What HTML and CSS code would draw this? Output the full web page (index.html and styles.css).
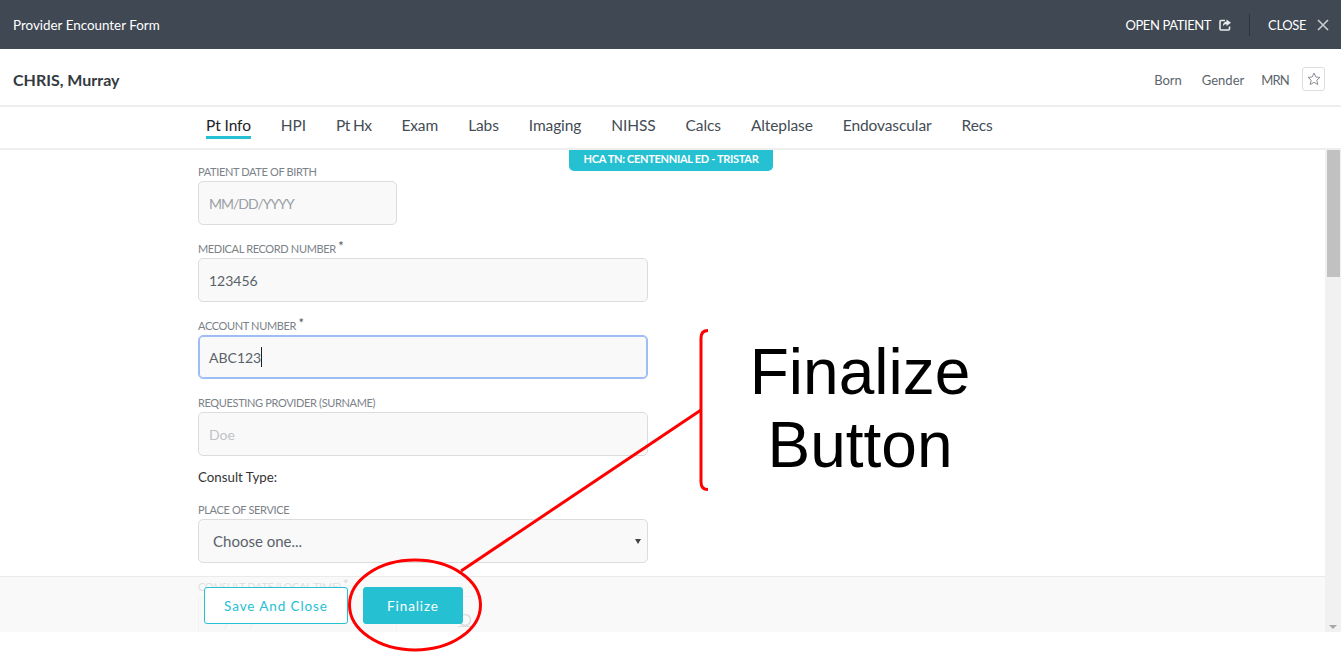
FILE: index.html
```html
<!DOCTYPE html>
<html lang="en">
<head>
    <meta charset="UTF-8">
    <title>Provider Encounter Form</title>
    <link rel="stylesheet" href="styles.css">
</head>
<body>
    <div class="app">
        <header class="topbar">
            <span class="topbar-title">Provider Encounter Form</span>
            <div class="topbar-actions">
                <a class="topbar-link">OPEN PATIENT
                    <svg class="icon-open" viewBox="0 0 12 12" width="12" height="12"><path d="M6 1.500H2a1 1 0 0 0-1 1V10a1 1 0 0 0 1 1h7.500a1 1 0 0 0 1-1V7.500" fill="none" stroke="#e8eaec" stroke-width="1.6"/><path d="M7.500 0.500 12 3.800 7.500 7V5.200C5.800 5.200 4.600 5.800 3.800 7.600 3.800 4.800 5.200 2.800 7.500 2.600Z" fill="#e8eaec"/></svg>
                </a>
                <span class="topbar-sep"></span>
                <a class="topbar-link link-close">CLOSE
                    <svg class="icon-close" viewBox="0 0 12 12" width="12" height="12"><path d="M1 1 11 11M11 1 1 11" stroke="#c9cdd1" stroke-width="1.600" fill="none"/></svg>
                </a>
            </div>
        </header>

        <div class="patient-bar">
            <span class="patient-name">CHRIS, Murray</span>
            <div class="patient-meta">
                <span class="meta-item meta-born">Born</span>
                <span class="meta-item meta-gender">Gender</span>
                <span class="meta-item meta-mrn">MRN</span>
                <span class="star-btn">
                    <svg viewBox="0 0 14 14" width="14" height="14"><path d="M7 1 8.800 5 13 5.400 9.800 8.200 10.800 12.600 7 10.300 3.200 12.600 4.200 8.200 1 5.400 5.200 5Z" fill="none" stroke="#8a8f96" stroke-width="1"/></svg>
                </span>
            </div>
        </div>

        <nav class="tabs">
            <a class="tab active">Pt Info</a>
            <a class="tab">HPI</a>
            <a class="tab tab-narrow">Pt Hx</a>
            <a class="tab">Exam</a>
            <a class="tab">Labs</a>
            <a class="tab">Imaging</a>
            <a class="tab">NIHSS</a>
            <a class="tab">Calcs</a>
            <a class="tab">Alteplase</a>
            <a class="tab">Endovascular</a>
            <a class="tab">Recs</a>
        </nav>

        <div class="body-row">
            <main class="content">
                <div class="facility">HCA TN: CENTENNIAL ED - TRISTAR</div>
                <form class="form">
                    <div class="field">
                        <label>PATIENT DATE OF BIRTH</label>
                        <div class="input short placeholder">MM/DD/YYYY</div>
                    </div>
                    <div class="field">
                        <label>MEDICAL RECORD NUMBER <sup>*</sup></label>
                        <div class="input">123456</div>
                    </div>
                    <div class="field">
                        <label>ACCOUNT NUMBER <sup>*</sup></label>
                        <div class="input focused">ABC123<span class="caret"></span></div>
                    </div>
                    <div class="field">
                        <label>REQUESTING PROVIDER (SURNAME)</label>
                        <div class="input placeholder light">Doe</div>
                    </div>
                    <p class="consult-type">Consult Type:</p>
                    <div class="field">
                        <label>PLACE OF SERVICE</label>
                        <div class="input select">Choose one...<span class="select-arrow"></span></div>
                    </div>
                    <div class="field">
                        <label>CONSULT DATE (LOCAL TIME) <sup>*</sup></label>
                        <div class="date-row">
                            <div class="input short date-tail">/ /</div>
                            <div class="input time">
                                <svg class="icon-clock" viewBox="0 0 16 18" width="16" height="18"><circle cx="8" cy="11" r="5.500" fill="none" stroke="#6a7075" stroke-width="1.500"/><path d="M1 17.500H15" fill="none" stroke="#6a7075" stroke-width="1"/></svg>
                            </div>
                        </div>
                    </div>
                </form>
                <footer class="actions">
                    <button type="button" class="btn btn-outline">Save And Close</button>
                    <button type="button" class="btn btn-fill">Finalize</button>
                </footer>
            </main>
            <div class="scrollbar">
                <div class="scroll-thumb"></div>
                <div class="scroll-arrow"></div>
            </div>
        </div>
    </div>

    <!-- red annotation drawn on top of the screenshot -->
    <svg class="markup" width="1341" height="660" viewBox="0 0 1341 660">
        <ellipse cx="415" cy="605" rx="65.500" ry="45" fill="none" stroke="#f00" stroke-width="3"/>
        <path d="M461 571 701 410" fill="none" stroke="#f00" stroke-width="3"/>
        <path d="M708 330.500Q701 330.500 701 338V482Q701 489.500 708 489.500" fill="none" stroke="#f00" stroke-width="3"/>
    </svg>
    <div class="markup-text">Finalize<br>Button</div>
</body>
</html>
```

FILE: styles.css
```css
*{
    box-sizing: border-box;
    margin: 0;
    padding: 0;
}
html, body{
    height: 100%;
    overflow: hidden;
}
body{
    position: relative;
    background-color: #fff;
    font-family: "Lato", "Noto Sans", sans-serif;
    color: #3f4850;
}
.app{
    height: 632px;
    display: flex;
    flex-direction: column;
}

/* top bar */
.topbar{
    height: 49px;
    flex: none;
    background-color: #3f4853;
    color: #fff;
    display: flex;
    align-items: center;
    justify-content: space-between;
    padding: 0 12px 0 13px;
}
.topbar-title{
    font-size: 13.400px;
}
.topbar-actions{
    display: flex;
    align-items: center;
    font-size: 13px;
    letter-spacing: -0.4px;
}
.topbar-link{
    display: flex;
    align-items: center;
    gap: 8px;
}
.link-close{
    gap: 11px;
}
.topbar-sep{
    width: 1px;
    height: 22px;
    margin: 0 18px;
    background-color: #2c343c;
}

/* patient bar */
.patient-bar{
    height: 58px;
    flex: none;
    display: flex;
    align-items: center;
    justify-content: space-between;
    padding: 3px 16px 0 13px;
    border-bottom: 2px solid #eee;
}
.patient-name{
    padding-top: 2px;
    font-size: 16px;
    font-weight: 700;
    color: #343a40;
}
.patient-meta{
    display: flex;
    align-items: center;
    font-size: 13px;
    color: #5c646c;
}
.meta-item{ padding-top: 2px; }
.meta-born{ margin-right: 20px; }
.meta-gender{ margin-right: 17px; }
.meta-mrn{ margin-right: 13px; letter-spacing: -0.8px; }
.star-btn{
    width: 23px;
    height: 24px;
    border: 1px solid #ddd;
    border-radius: 3px;
    display: flex;
    align-items: center;
    justify-content: center;
}

/* tabs */
.tabs{
    height: 43px;
    flex: none;
    display: flex;
    gap: 30px;
    padding: 9px 0 0 206px;
    border-bottom: 2px solid #eee;
    font-size: 15.500px;
    letter-spacing: -0.1px;
}
.tab{
    height: 23px;
    line-height: 18px;
    color: #444c54;
}
.tab-narrow{
    letter-spacing: -0.6px;
}
.tab.active{
    color: #1d2226;
    border-bottom: 3px solid #26c0d3;
}

/* scrolling part */
.body-row{
    flex: 1;
    min-height: 0;
    display: flex;
}
.content{
    flex: 1;
    position: relative;
    overflow: hidden;
}
.facility{
    position: absolute;
    top: 0;
    left: 569px;
    width: 204px;
    height: 21px;
    line-height: 18px;
    text-align: center;
    font-size: 11px;
    font-weight: 700;
    letter-spacing: -0.3px;
    color: #fff;
    background-color: #26c0d3;
    border-radius: 0 0 5px 5px;
}
.form{
    width: 450px;
    margin-left: 198px;
    padding-top: 15px;
}
.field{
    margin-bottom: 17px;
}
.field label{
    display: block;
    height: 16px;
    line-height: 14px;
    font-size: 11px;
    letter-spacing: -0.35px;
    color: #7b8288;
    white-space: nowrap;
}
.field sup{
    font-size: 13px;
    line-height: 0;
    vertical-align: 2px;
    color: #555;
}
.input{
    height: 44px;
    padding: 0 10px;
    font-size: 14px;
    color: #5a6269;
    background-color: #f9f9f9;
    border: 1px solid #dcdcdc;
    border-radius: 5px;
    display: flex;
    align-items: center;
    position: relative;
}
.input.short{
    width: 199px;
}
.input.placeholder{
    color: #9aa0a5;
}
.input.short.placeholder{
    letter-spacing: -1px;
}
.input.light{
    color: #c0c3c6;
}
.input.focused{
    border-color: #9fbdf5;
    box-shadow: inset 0 0 0 1px #9fbdf5;
}
.caret{
    width: 1px;
    height: 20px;
    background-color: #222;
}
.input.select{
    padding-left: 14px;
    font-size: 15px;
}
.select-arrow{
    position: absolute;
    right: 6px;
    top: 19px;
    border-left: 3px solid transparent;
    border-right: 3px solid transparent;
    border-top: 5px solid #444;
}
.consult-type{
    height: 35px;
    margin-top: -5px;
    line-height: 18px;
    font-size: 13.300px;
    color: #333;
}
.date-row{
    display: flex;
}
/* only the foot of the date value shows under the save button */
.input.date-tail{
    padding: 27px 0 0 25px;
    align-items: flex-start;
    font-size: 7px;
    line-height: 7px;
    letter-spacing: 10px;
    color: #8a8f96;
}
.input.time{
    width: 77px;
    justify-content: flex-end;
    padding-right: 1px;
    border-left: none;
    border-right: none;
    background-color: transparent;
}

/* footer bar lies over the form */
.actions{
    position: absolute;
    left: 0;
    right: 0;
    bottom: 0;
    height: 56px;
    padding: 10px 0 0 204px;
    display: flex;
    align-items: flex-start;
    gap: 15px;
    background-color: rgba(247, 247, 247, 0.8);
    border-top: 1px solid #eaeaea;
}
.btn{
    height: 37px;
    border-radius: 3px;
    font-family: inherit;
    font-size: 13.500px;
    letter-spacing: 0.9px;
    border: 1px solid #26c0d3;
}
.btn-outline{
    width: 144px;
    color: #26c0d3;
    background-color: #fff;
}
.btn-fill{
    width: 100px;
    color: #fff;
    background-color: #26c0d3;
}

/* fake scrollbar */
.scrollbar{
    width: 16px;
    flex: none;
    position: relative;
    background-color: #f1f1f1;
    padding: 0 1px 0 2px;
}
.scroll-thumb{
    height: 127px;
    background-color: #c1c1c1;
}
.scroll-arrow{
    position: absolute;
    right: 4px;
    bottom: 3px;
    border-left: 4px solid transparent;
    border-right: 4px solid transparent;
    border-top: 4px solid #a8a8a8;
}

/* annotation */
.markup{
    position: absolute;
    top: 0;
    left: 0;
    pointer-events: none;
}
.markup-text{
    position: absolute;
    left: 700px;
    top: 336px;
    width: 320px;
    text-align: center;
    font-family: "Liberation Sans", Arial, sans-serif;
    font-size: 64px;
    line-height: 73px;
    color: #000;
}
```
